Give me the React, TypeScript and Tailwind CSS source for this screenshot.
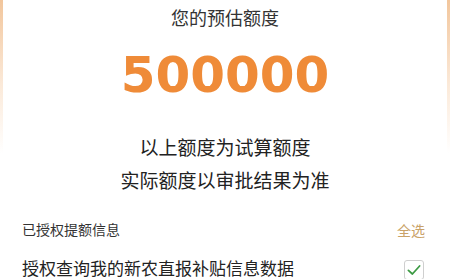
export default function App() {
  const cjk = { fontFamily: '"Noto Sans CJK SC", "Noto Sans", sans-serif' };

  return (
    <div className="h-[279px] w-[453px] overflow-hidden bg-white">
      <div className="mr-[3px] h-full bg-gradient-to-b from-[#f2c69c] via-[#fbe9d8] via-[30%] to-white to-[55%] px-[3px]">
        <div className="flex h-full flex-col bg-white" style={cjk}>
          <div className="pt-[6px] text-center text-[18px] leading-[22px] text-[#333]">您的预估额度</div>

          <div
            className="mt-[22px] text-center text-[50px] font-bold leading-[50px] text-[#ef8b38]"
            style={{ fontFamily: '"DejaVu Sans", sans-serif' }}
          >
            500000
          </div>

          <div className="mt-[35px] text-center text-[19px] leading-[24px] text-[#222]">以上额度为试算额度</div>
          <div className="mt-[9px] text-center text-[19px] leading-[24px] text-[#222]">实际额度以审批结果为准</div>

          <div className="mt-[25px] flex items-center justify-between pl-[19px] pr-[22px]">
            <span className="text-[14px] leading-[20px] text-[#333]">已授权提额信息</span>
            <span className="mt-[3px] text-[14px] leading-[20px] text-[#c9a268]">全选</span>
          </div>

          <div className="mt-[16px] flex items-center justify-between pl-[19px] pr-[23px]">
            <span className="text-[17px] leading-[24px] text-[#222]">授权查询我的新农直报补贴信息数据</span>
            <span className="mt-[3px] flex h-[20px] w-[20px] items-center justify-center rounded-[3px] border border-[#cfcfcf] bg-white">
              <svg viewBox="0 0 20 20" className="h-[16px] w-[16px]">
                <path d="M3 10.5 L8 15 L17 5" fill="none" stroke="#3c9a43" strokeWidth="2.2" strokeLinecap="round" strokeLinejoin="round" />
              </svg>
            </span>
          </div>
        </div>
      </div>
    </div>
  );
}
